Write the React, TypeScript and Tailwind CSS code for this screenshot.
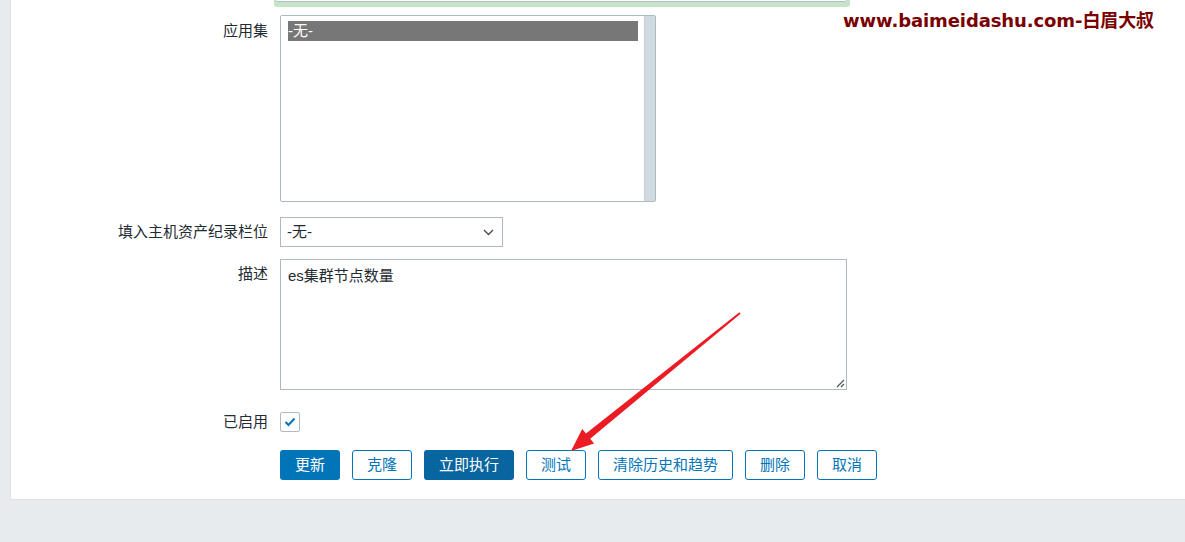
import React from "react";

const font = { fontFamily: '"Liberation Sans", "Noto Sans CJK SC", sans-serif' };

function Label({ children, className = "" }: { children: React.ReactNode; className?: string }) {
  return (
    <div className={`w-[269px] shrink-0 pr-[12px] text-right text-[15px] text-[#1f2c33] ${className}`}>{children}</div>
  );
}

const btnOutline =
  "h-[30px] rounded-[3px] border border-[#0275b8] bg-white text-[#0275b8] text-[15px] whitespace-nowrap flex items-center justify-center";

export default function App() {
  return (
    <div className="w-[1185px] h-[542px] bg-[#e8ebee] pl-[10px] overflow-hidden" style={font}>
      <div className="relative h-[500px] bg-white border-l border-b border-[#dde2e6]">
        {/* cropped element at top with green ring */}
        <div className="ml-[263px] w-[576px] h-[7px] bg-[#c6e4c9] rounded-b-[3px] px-[3px]">
          <div className="h-[2px] bg-white border-b border-[#b3bec5] mr-[2px]" />
        </div>

        {/* 应用集 */}
        <div className="flex mt-[8px]">
          <Label className="pt-[6px] leading-[20px]">应用集</Label>
          <div className="w-[376px] h-[187px] border border-[#aeb9c1] rounded-[2px] flex bg-white">
            <div className="flex-1 pl-[7px] pt-[5px] pr-[6px]">
              <div className="h-[20px] bg-[#777777] text-white text-[15px] leading-[20px]">-无-</div>
            </div>
            <div className="w-[11px] bg-[#d1dadf] border-l border-[#c4cfd5]" />
          </div>
        </div>

        {/* 填入主机资产纪录栏位 */}
        <div className="flex mt-[15px]">
          <Label className="leading-[30px]">填入主机资产纪录栏位</Label>
          <div className="w-[223px] h-[30px] border border-[#aeb9c1] flex items-center justify-between pl-[6px] pr-[8px] text-[15px] text-[#1f2c33]">
            <span>-无-</span>
            <svg width="11" height="7" viewBox="0 0 11 7" fill="none">
              <path d="M1 1 L5.5 5.5 L10 1" stroke="#3d4a52" strokeWidth="1.3" />
            </svg>
          </div>
        </div>

        {/* 描述 */}
        <div className="flex mt-[12px]">
          <Label className="pt-[5px] leading-[20px]">描述</Label>
          <div className="relative w-[567px] h-[131px] border border-[#aeb9c1] pl-[7px] pt-[6px] text-[15px] leading-[20px] text-[#1f2c33]">
            es集群节点数量
            <svg className="absolute right-[1px] bottom-[1px]" width="10" height="10" viewBox="0 0 10 10">
              <path d="M9 2 L2 9 M9 6 L6 9" stroke="#555" strokeWidth="1.2" />
            </svg>
          </div>
        </div>

        {/* 已启用 */}
        <div className="flex mt-[22px] items-center">
          <Label className="leading-[20px]">已启用</Label>
          <div className="w-[20px] h-[20px] border border-[#aeb9c1] rounded-[2px] flex items-center justify-center">
            <svg width="12" height="10" viewBox="0 0 12 10" fill="none">
              <path d="M1.5 5 L4.5 8 L10.5 1.5" stroke="#0275b8" strokeWidth="2" />
            </svg>
          </div>
        </div>

        {/* buttons */}
        <div className="flex mt-[18px] pl-[269px] gap-[12px]">
          <button className="h-[30px] w-[60px] rounded-[3px] bg-[#0275b8] text-white text-[15px] whitespace-nowrap">更新</button>
          <button className={`${btnOutline} w-[60px]`}>克隆</button>
          <button className="h-[30px] w-[90px] rounded-[3px] bg-[#0865a0] text-white text-[15px] whitespace-nowrap">立即执行</button>
          <button className={`${btnOutline} w-[60px]`}>测试</button>
          <button className={`${btnOutline} w-[135px]`}>清除历史和趋势</button>
          <button className={`${btnOutline} w-[60px]`}>删除</button>
          <button className={`${btnOutline} w-[60px]`}>取消</button>
        </div>

        {/* watermark */}
        <div
          className="absolute left-[832px] top-[10px] text-[18px] font-bold text-[#7a0000] tracking-[-0.1px] leading-[22px]"
          style={{ fontFamily: '"DejaVu Sans", "Noto Sans CJK SC", sans-serif' }}
        >
          www.baimeidashu.com-白眉大叔
        </div>

        {/* red arrow */}
        <svg className="absolute left-[-11px] top-0 pointer-events-none" width="1185" height="500" viewBox="0 0 1185 500">
          <polygon
            points="740.6,313.8 590.2,438.7 594.1,443.5 571,451 582.2,428.9 586.0,433.5 739.4,312.2"
            fill="#ec1c24"
          />
        </svg>
      </div>
    </div>
  );
}
